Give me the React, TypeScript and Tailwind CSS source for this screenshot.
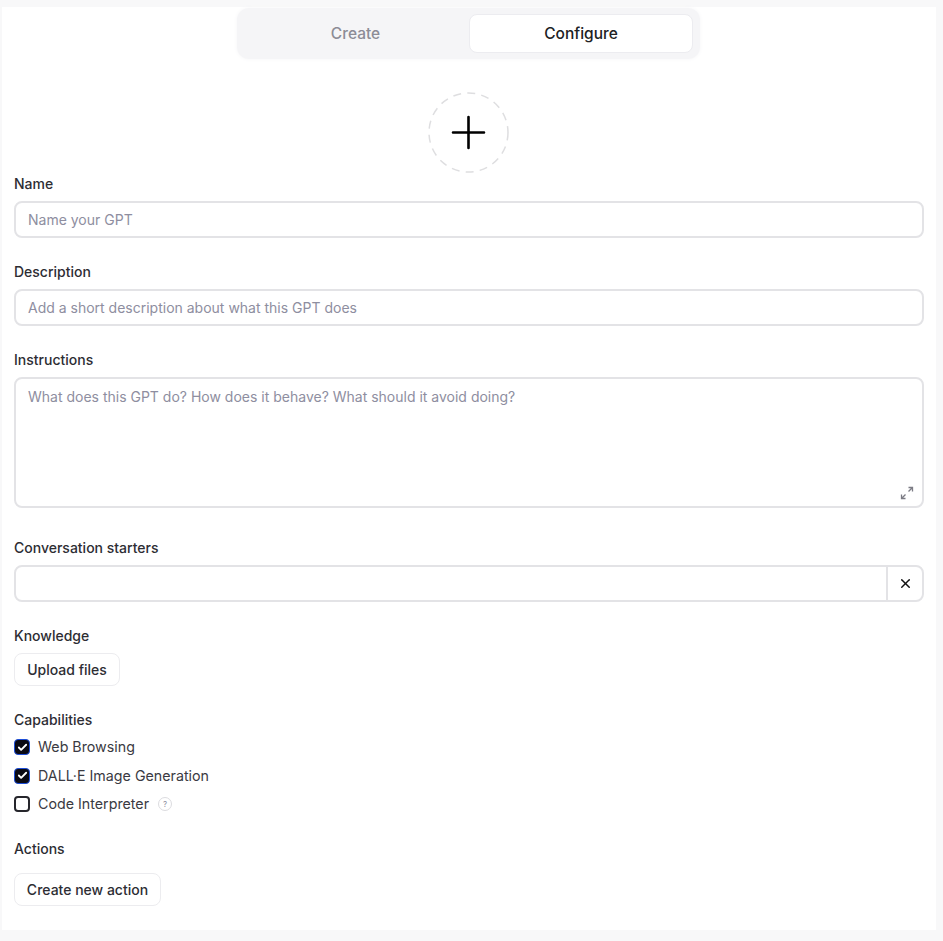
import { Check, X } from 'lucide-react'

const capabilities = [
  { name: 'Web Browsing', checked: true },
  { name: 'DALL·E Image Generation', checked: true },
  { name: 'Code Interpreter', checked: false, help: true },
]

function Label({ children, className = '' }: { children: React.ReactNode; className?: string }) {
  return <div className={`text-sm leading-[17px] font-medium text-[#2d2d33] ${className}`}>{children}</div>
}

function Field({ label, placeholder }: { label: string; placeholder: string }) {
  return (
    <div className="flex flex-col gap-[9px] mb-[25px]">
      <Label>{label}</Label>
      <div className="h-[37px] flex items-center px-3 border-2 border-[#e3e3e6] rounded-lg text-sm text-[#8e8ea0]">
        {placeholder}
      </div>
    </div>
  )
}

export default function App() {
  return (
    <div className="h-[941px] w-[943px] overflow-hidden bg-[#f8f8f9] pt-[7px] pl-[2px] font-['Inter',sans-serif]">
      <div className="w-[934px] h-[923px] bg-white px-3">
        <div className="flex justify-center pr-px">
          <div className="w-[463px] h-[51px] mt-px flex items-center gap-[5px] pl-[6px] bg-[#f5f5f7] rounded-xl shadow-[0_0_4px_#f5f5f7]">
            <button className="w-[221px] h-[39px] pl-1 pt-px text-[15.5px] font-medium text-[#8c8c96]">Create</button>
            <button className="w-[224px] h-[39px] pt-px bg-white border border-[#ececf0] rounded-lg text-[15.5px] font-medium text-[#202123]">
              Configure
            </button>
          </div>
        </div>

        <div className="flex justify-center pr-px mt-[33px] mb-[2px]">
          <svg width="81" height="81" viewBox="0 0 81 81" fill="none">
            <circle cx="40.5" cy="40.5" r="39.5" stroke="#dedee0" strokeWidth="1.5" strokeDasharray="8 6.2" />
            <path d="M25 40.5H56M40.5 25V56" stroke="#000" strokeWidth="2.6" strokeLinecap="round" />
          </svg>
        </div>

        <Field label="Name" placeholder="Name your GPT" />
        <Field label="Description" placeholder="Add a short description about what this GPT does" />

        <div className="flex flex-col gap-[9px] mb-[31px]">
          <Label>Instructions</Label>
          <div className="relative h-[131px] px-3 pt-2 border-2 border-[#e3e3e6] rounded-lg text-sm text-[#8e8ea0]">
            What does this GPT do? How does it behave? What should it avoid doing?
            <svg
              className="absolute right-[8px] bottom-[6px]"
              width="14"
              height="14"
              viewBox="0 0 14 14"
              fill="none"
              stroke="#7c7c85"
              strokeWidth="1.3"
            >
              <path d="M1.5 8.5V12.5H5.5M1.5 12.5L5.5 8.5M8.5 1.5H12.5V5.5M12.5 1.5L8.5 5.5" />
            </svg>
          </div>
        </div>

        <div className="flex flex-col gap-[9px] mb-[25px]">
          <Label>Conversation starters</Label>
          <div className="h-[37px] flex border-2 border-[#e3e3e6] rounded-lg">
            <div className="flex-1" />
            <div className="w-[36px] border-l-2 border-[#e3e3e6] flex items-center justify-center">
              <X size={15} strokeWidth={2.4} className="text-[#111]" />
            </div>
          </div>
        </div>

        <Label className="mb-[9px]">Knowledge</Label>
        <button className="block h-[33px] w-[106px] border border-[#ececef] rounded-lg text-sm font-medium text-[#2d2d33] mb-[25px]">
          Upload files
        </button>

        <Label className="mb-[11px]">Capabilities</Label>
        <div className="flex flex-col gap-[12.5px] mb-[28px]">
          {capabilities.map((item) => (
            <div key={item.name} className="flex items-center h-4 text-[14.25px] text-[#3a3a42]">
              {item.checked ? (
                <span className="w-4 h-4 rounded-[4px] bg-[#0a0a14] border border-[#1d4ed8] flex items-center justify-center mr-2">
                  <Check size={11} strokeWidth={4} className="text-white" />
                </span>
              ) : (
                <span className="w-4 h-4 rounded-[4px] border-2 border-[#26262c] mr-2" />
              )}
              {item.name}
              {item.help && (
                <span className="ml-[9px] w-[14px] h-[14px] rounded-full border border-[#dcdce0] flex items-center justify-center text-[8px] text-[#8e8ea0]">
                  ?
                </span>
              )}
            </div>
          ))}
        </div>

        <Label className="mb-4">Actions</Label>
        <button className="block h-[33px] w-[147px] border border-[#ececef] rounded-lg text-sm font-medium text-[#2d2d33]">
          Create new action
        </button>
      </div>
    </div>
  )
}
